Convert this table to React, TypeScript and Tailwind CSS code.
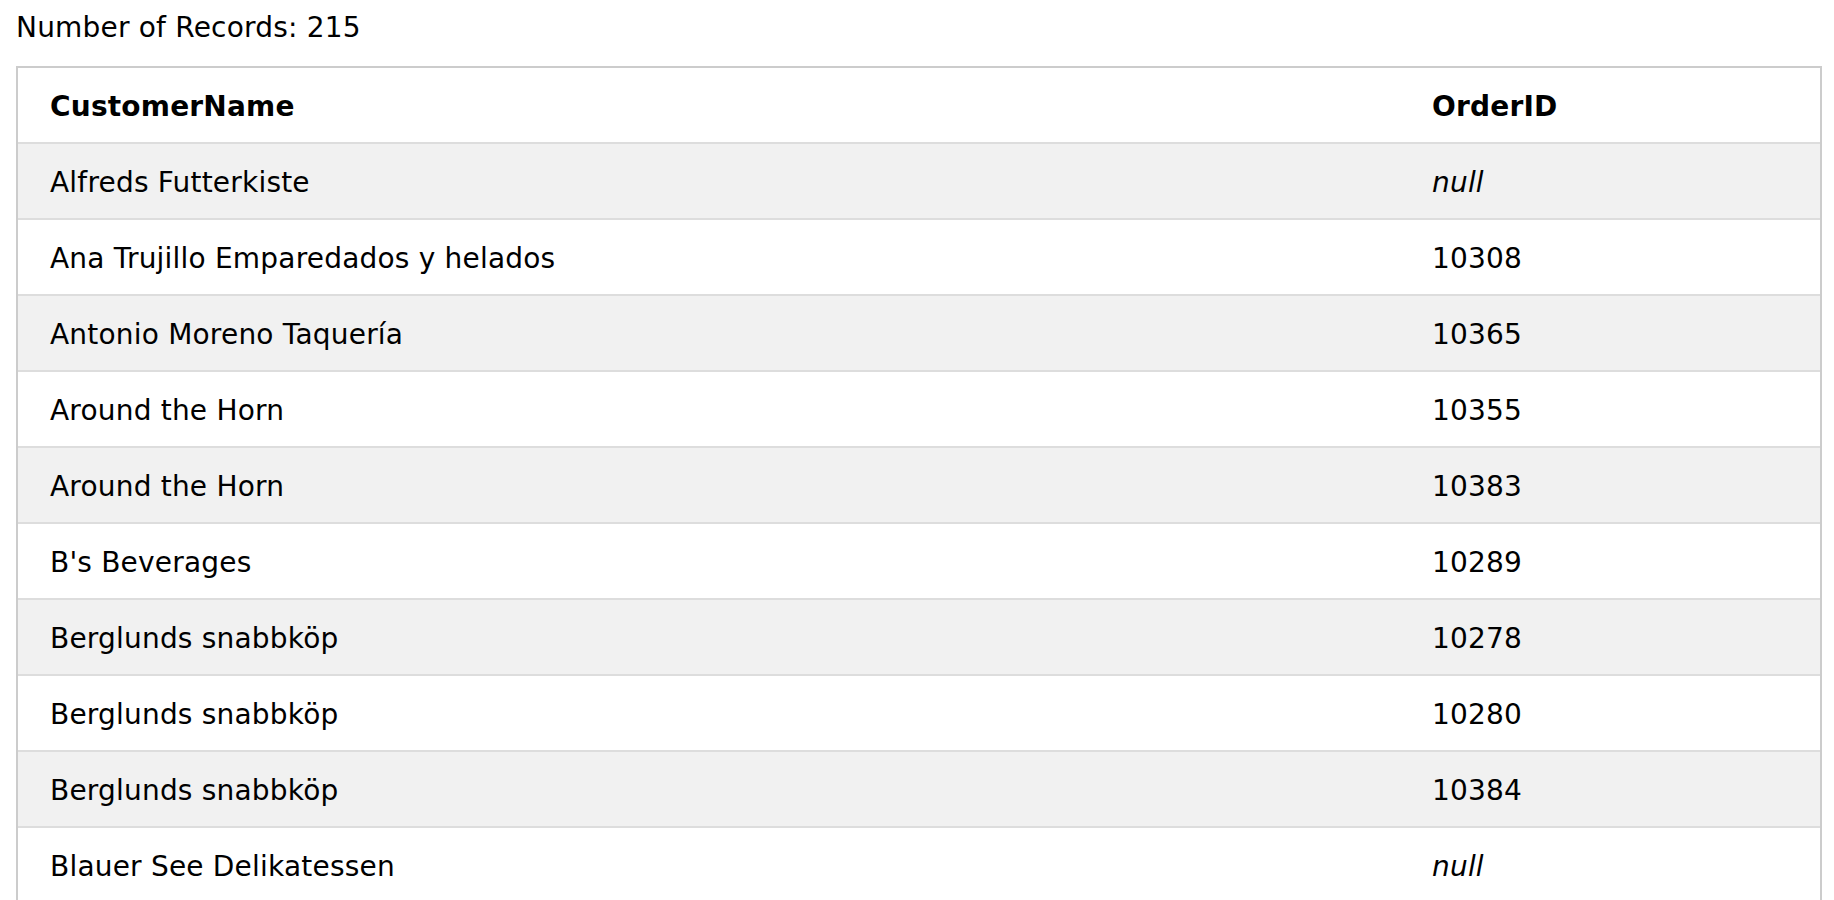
type Row = { name: string; orderId: number | null }

const rows: Row[] = [
  { name: 'Alfreds Futterkiste', orderId: null },
  { name: 'Ana Trujillo Emparedados y helados', orderId: 10308 },
  { name: 'Antonio Moreno Taquería', orderId: 10365 },
  { name: 'Around the Horn', orderId: 10355 },
  { name: 'Around the Horn', orderId: 10383 },
  { name: "B's Beverages", orderId: 10289 },
  { name: 'Berglunds snabbköp', orderId: 10278 },
  { name: 'Berglunds snabbköp', orderId: 10280 },
  { name: 'Berglunds snabbköp', orderId: 10384 },
  { name: 'Blauer See Delikatessen', orderId: null },
  { name: 'Blondel père et fils', orderId: 10265 },
  { name: 'Blondel père et fils', orderId: 10297 },
]

export default function App() {
  return (
    <div className="min-h-screen bg-white font-['DejaVu_Sans','Verdana',sans-serif] text-[28px] leading-[42px] tracking-[0.2px] text-black">
      <div className="pt-[7px] pl-4">Number of Records: 215</div>

      <table className="ml-4 mt-[17px] w-[1806px] table-fixed border-separate border-spacing-0 border-2 border-[#ccc]">
        <colgroup>
          <col className="w-[1398px]" />
          <col />
        </colgroup>
        <thead>
          <tr className="bg-white">
            <th className="border-b-2 border-[#ddd] pt-[18px] pb-[14px] pl-8 pr-4 text-left font-bold">
              CustomerName
            </th>
            <th className="border-b-2 border-[#ddd] pt-[18px] pb-[14px] pl-4 pr-4 text-left font-bold">
              OrderID
            </th>
          </tr>
        </thead>
        <tbody>
          {rows.map((r, i) => (
            <tr key={i} className={i % 2 === 0 ? 'bg-[#f1f1f1]' : 'bg-white'}>
              <td className="border-b-2 border-[#ddd] pt-[18px] pb-[14px] pl-8 pr-4">{r.name}</td>
              <td className="border-b-2 border-[#ddd] pt-[18px] pb-[14px] pl-4 pr-4">
                {r.orderId === null ? <i>null</i> : r.orderId}
              </td>
            </tr>
          ))}
        </tbody>
      </table>
    </div>
  )
}
